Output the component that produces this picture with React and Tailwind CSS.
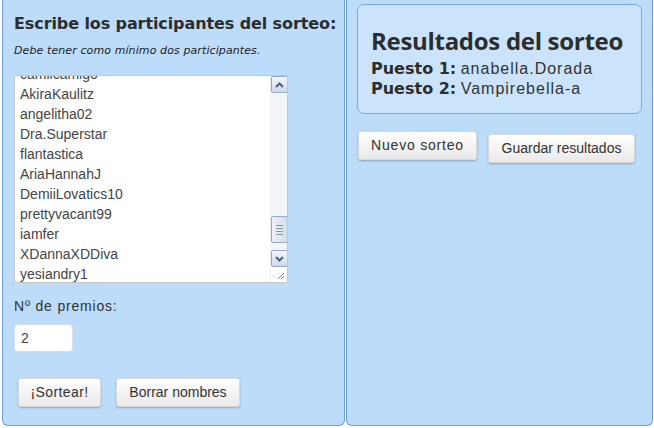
import React from "react";

const names = [
  "camilcamigo",
  "AkiraKaulitz",
  "angelitha02",
  "Dra.Superstar",
  "flantastica",
  "AriaHannahJ",
  "DemiiLovatics10",
  "prettyvacant99",
  "iamfer",
  "XDannaXDDiva",
  "yesiandry1",
];

function Btn({ children, className = "" }) {
  return (
    <button
      className={
        "h-[29px] rounded-[3px] border border-[#d8d8d8] bg-gradient-to-b from-white to-[#e9e9e9] shadow-[0_1px_2px_rgba(0,0,0,0.25)] text-[14px] text-[#333] font-['Liberation_Sans',Arial,sans-serif] " +
        className
      }
    >
      {children}
    </button>
  );
}

function ScrollArrow({ up }) {
  return (
    <div className="w-[17px] h-[17px] rounded-[2px] border border-[#93a9c4] bg-gradient-to-b from-[#f4f7fb] to-[#cfd9e6] flex items-center justify-center">
      <svg width="9" height="6" viewBox="0 0 9 6">
        <path
          d={up ? "M1 5 L4.5 1.5 L8 5" : "M1 1 L4.5 4.5 L8 1"}
          fill="none"
          stroke="#4d6185"
          strokeWidth="2"
        />
      </svg>
    </div>
  );
}

export default function App() {
  return (
    <div className="w-[654px] h-[428px] bg-white flex gap-[1px] pl-[2px] font-['Liberation_Sans',Arial,sans-serif] overflow-hidden">
      {/* Left panel */}
      <div className="w-[343px] h-[426px] border border-t-0 border-[#6c9fd6] rounded-b-[6px] bg-[#bcdcfa] flex flex-col pl-[11px]">
        <h2 className="mt-[14px] text-[16px] leading-[20px] font-bold text-[#2d2d2d] font-['DejaVu_Sans',Verdana,sans-serif] tracking-[-0.1px]">
          Escribe los participantes del sorteo:
        </h2>
        <p className="mt-[10px] text-[11px] leading-[14px] italic text-[#222] font-['DejaVu_Sans',Verdana,sans-serif] tracking-[0.1px]">
          Debe tener como mínimo dos participantes.
        </p>
        <div className="mt-[17px] w-[274px] h-[208px] bg-white border border-[#c6c6c6] rounded-[2px] flex overflow-hidden">
          <div className="flex-1 overflow-hidden pl-[5px]">
            <div className="-mt-[12px]">
              {names.map((n) => (
                <div key={n} className="h-[20px] leading-[20px] text-[14px] text-[#444]">
                  {n}
                </div>
              ))}
            </div>
          </div>
          <div className="w-[17px] flex flex-col bg-[#f3f5f8] border-l border-[#eef0f3]">
            <ScrollArrow up />
            <div className="h-[123px]" />
            <div className="w-[17px] h-[27px] rounded-[2px] border border-[#93a9c4] bg-gradient-to-r from-[#eef2f7] to-[#d4dde8] flex flex-col items-center justify-center gap-[2px]">
              <div className="w-[7px] h-[1px] bg-[#8a97aa]" />
              <div className="w-[7px] h-[1px] bg-[#8a97aa]" />
              <div className="w-[7px] h-[1px] bg-[#8a97aa]" />
              <div className="w-[7px] h-[1px] bg-[#8a97aa]" />
            </div>
            <div className="h-[7px]" />
            <ScrollArrow />
            <div className="flex-1 bg-white flex items-end justify-end pr-[2px] pb-[2px]">
              <svg width="8" height="8" viewBox="0 0 8 8">
                <path d="M7 1 L1 7 M7 4 L4 7" stroke="#888" strokeWidth="1" />
              </svg>
            </div>
          </div>
        </div>
        <div className="mt-[15px] text-[14px] leading-[16px] text-[#333] tracking-[0.8px]">Nº de premios:</div>
        <div className="mt-[10px] w-[59px] h-[28px] bg-white border border-[#d6dee8] rounded-[4px] flex items-center pl-[6px] text-[14px] text-[#444]">
          2
        </div>
        <div className="mt-[26px] flex gap-[15px] pl-[4px]">
          <Btn className="w-[83px] tracking-[0.4px]">¡Sortear!</Btn>
          <Btn className="w-[124px]">Borrar nombres</Btn>
        </div>
      </div>

      {/* Right panel */}
      <div className="w-[307px] h-[426px] border border-t-0 border-[#6c9fd6] rounded-b-[6px] bg-[#bcdcfa] flex flex-col pl-[10px]">
        <div className="mt-[4px] w-[285px] h-[110px] border border-[#7aa8de] rounded-[7px] bg-[#cbe4fb] pl-[13px]">
          <h1 className="mt-[21px] text-[24px] leading-[30px] font-bold text-[#2d2d2d] font-['Open_Sans',sans-serif] tracking-[-0.3px] whitespace-nowrap">
            Resultados del sorteo
          </h1>
          <div className="mt-[3px] text-[16px] leading-[20px] text-[#2d2d2d] whitespace-nowrap">
            <span className="font-bold font-['DejaVu_Sans',Verdana,sans-serif]">Puesto 1:</span>{" "}
            <span className="text-[#333] tracking-[1px]">anabella.Dorada</span>
          </div>
          <div className="text-[16px] leading-[20px] text-[#2d2d2d] whitespace-nowrap">
            <span className="font-bold font-['DejaVu_Sans',Verdana,sans-serif]">Puesto 2:</span>{" "}
            <span className="text-[#333] tracking-[1px]">Vampirebella-a</span>
          </div>
        </div>
        <div className="mt-[17px] flex items-start gap-[11px] pl-[1px]">
          <Btn className="w-[119px] tracking-[0.8px]">Nuevo sorteo</Btn>
          <Btn className="w-[147px] mt-[3px]">Guardar resultados</Btn>
        </div>
      </div>
    </div>
  );
}
